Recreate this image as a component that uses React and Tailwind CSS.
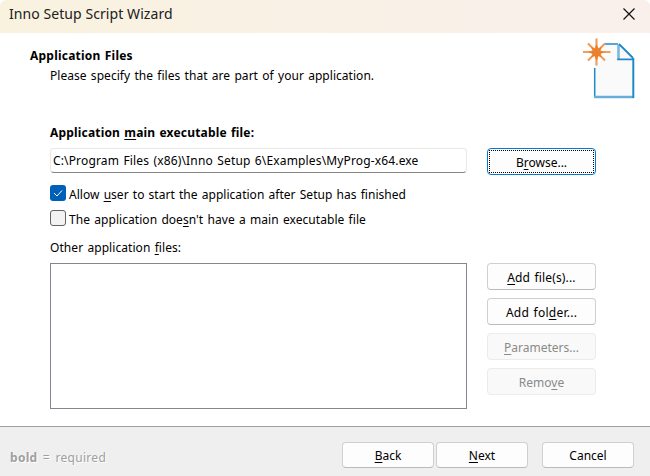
function Key({ children }) {
  return <span className="underline decoration-1 underline-offset-2">{children}</span>;
}

function Button({ children, className = "", disabled = false }) {
  const tone = disabled
    ? "border-[#ebebeb] bg-[#f9f9f9] text-[#8a8a8a]"
    : "border-[#d0d0d0] border-b-[#bababa] bg-[#fdfdfd] text-black";
  return (
    <button className={`flex h-[27px] w-[109px] shrink-0 items-center justify-center rounded border pt-0.5 ${tone} ${className}`}>
      <span className="whitespace-nowrap">{children}</span>
    </button>
  );
}

function NewDocumentIcon() {
  return (
    <svg width="54" height="62" viewBox="0 0 54 62" className="mt-[5px] mr-3.5 shrink-0">
      <path d="M12 6H36L51 21V59H12Z" fill="#fafafa" />
      <path d="M12.7 30V59M23 6H36" stroke="#2189c9" strokeWidth="1.5" fill="none" />
      <path d="M12 59H52" stroke="#67afd9" strokeWidth="2.6" />
      <path d="M51.3 20V60" stroke="#2189c9" strokeWidth="2" />
      <path d="M36.5 6.5V22" stroke="#7bb8df" strokeWidth="2.6" />
      <path d="M35.2 21.3H52M37 6L51 20" stroke="#2189c9" strokeWidth="1.8" fill="none" />
      <circle cx="14.5" cy="14" r="10" fill="white" />
      <path d="M14.5 0.5V27.5M1 14H28.5" stroke="#efa05d" strokeWidth="2.2" />
      <path d="M6 5.5L23 22.5M23 5.5L6 22.5" stroke="#ef9a54" strokeWidth="2" />
      <path d="M14.5 6L16.5 10.5L20 8.5L18.5 12.5L23 14L18.5 16L20 19.5L16.5 18L14.5 23L12.5 18L9 19.5L10.5 16L6 14L10.5 12.5L9 8.5L12.5 10.5Z" fill="#ec812d" />
    </svg>
  );
}

export default function App() {
  return (
    <div className="flex h-[476px] w-[650px] flex-col overflow-hidden bg-white font-['Noto_Sans',sans-serif] text-[12px] leading-4 text-black">
      <header className="flex h-[33px] shrink-0 items-center justify-between rounded-t-md bg-linear-to-r from-[#f9f2df] to-[#f9f0ec] pr-[15px] pl-[9px]">
        <h1 className="pb-1.5 text-[14px] tracking-[0.07px] text-[#202020]">Inno Setup Script Wizard</h1>
        <svg width="12" height="12" viewBox="0 0 12 12" className="mb-[5px]">
          <path d="M0.5 0.5L11.5 11.5M11.5 0.5L0.5 11.5" stroke="#111" strokeWidth="1.2" />
        </svg>
      </header>
      <section className="flex h-[91px] shrink-0 justify-between">
        <div className="pt-[15px] pl-[30px]">
          <h2 className="font-bold tracking-[0.22px] [word-spacing:0.9px]">Application Files</h2>
          <p className="mt-1 pl-5 tracking-[0.04px] [word-spacing:1.1px]">Please specify the files that are part of your application.</p>
        </div>
        <NewDocumentIcon />
      </section>
      <main className="flex h-[302px] shrink-0 gap-5 pl-[50px]">
        <div className="flex w-[417px] flex-col">
          <div className="h-6 font-bold tracking-[0.18px] [word-spacing:0.9px]">
            <div className="pt-px">Application <Key>m</Key>ain executable file:</div>
          </div>
          <div className="flex h-[25px] shrink-0 items-center rounded-sm border border-[#e8e8e8] border-b-[#868686] pl-0.5 tracking-[0.15px] [word-spacing:1.1px]">
            C:\Program Files (x86)\Inno Setup 6\Examples\MyProg-x64.exe
          </div>
          <div className="mt-3 flex h-4 items-center gap-[3px]">
            <span className="flex size-4 shrink-0 items-center justify-center rounded-[3px] bg-[#005fb8]">
              <svg width="10" height="8" viewBox="0 0 10 8"><path d="M1 4L4 7L9 1.5" stroke="white" fill="none" /></svg>
            </span>
            <span className="pt-[3px] tracking-[0.03px] [word-spacing:1px]">Allow <Key>u</Key>ser to start the application after Setup has finished</span>
          </div>
          <div className="mt-[9px] flex h-4 items-center gap-[3px]">
            <span className="size-4 shrink-0 rounded-[3px] border border-[#626262] bg-[#f3f3f3]" />
            <span className="pt-[3px] tracking-[0.05px] [word-spacing:1.1px]">The application doe<Key>s</Key>n't have a main executable file</span>
          </div>
          <div className="mt-[14px] h-[23px] tracking-[0.06px] [word-spacing:1.1px]">Other application <Key>f</Key>iles:</div>
          <div className="h-[146px] shrink-0 border border-[#828790]" />
        </div>
        <div className="flex flex-col gap-2 pt-6">
          <Button className="relative mb-20 border-[#0078d4]! shadow-[inset_0_0_0_1px_#ffffff]">
            <span>B<Key>r</Key>owse...</span>
            <span className="absolute inset-px border border-dotted border-black" />
          </Button>
          <Button className="[word-spacing:1.1px] tracking-[0.15px]"><Key>A</Key>dd file(s)...</Button>
          <Button className="[word-spacing:1.1px] tracking-[0.25px]">Add fol<Key>d</Key>er...</Button>
          <Button disabled><Key>P</Key>arameters...</Button>
          <Button disabled>Remo<Key>v</Key>e</Button>
        </div>
      </main>
      <footer className="flex h-[50px] items-start justify-between border-t border-[#a0a0a0] bg-[#efefef] pt-[15px] pr-4 pl-[10px]">
        <span className="pt-2 tracking-[0.3px] text-[#a0a0a0] [text-shadow:1px_1px_0_white] [word-spacing:2px]"><b>bold</b> = required</span>
        <div className="flex">
          <Button className="h-[26px]! w-[92px]!"><Key>B</Key>ack</Button>
          <Button className="ml-0.5 h-[26px]! w-[92px]!"><Key>N</Key>ext</Button>
          <Button className="ml-[14px] h-[26px]! w-[92px]!">Cancel</Button>
        </div>
      </footer>
    </div>
  );
}
